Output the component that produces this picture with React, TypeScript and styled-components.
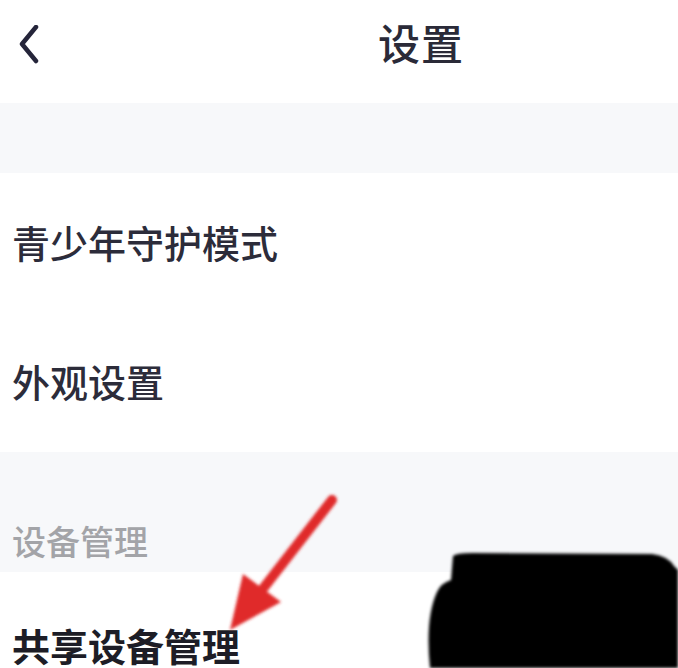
import React from "react";
import styled, { createGlobalStyle } from "styled-components";

const GlobalStyle = createGlobalStyle`
  html, body {
    margin: 0;
    padding: 0;
    background: #ffffff;
  }
  body {
    font-family: "Noto Sans CJK SC", "Noto Sans", sans-serif;
    overflow: hidden;
  }
`;

const Page = styled.div`
  position: relative;
  width: 678px;
  height: 668px;
  overflow: hidden;
  background: #ffffff;
`;

const Header = styled.header`
  height: 103px;
  display: flex;
  align-items: center;
  padding: 0 0 0 18px;
  box-sizing: border-box;
  background: #ffffff;
`;

const BackButton = styled.button`
  width: 26px;
  height: 44px;
  padding: 0;
  border: none;
  background: transparent;
  display: flex;
  align-items: center;
  margin-top: -14px;
`;

const Title = styled.h1`
  margin: -20px 0 0 334px;
  font-size: 42px;
  font-weight: 500;
  color: #2a2a38;
  letter-spacing: 1px;
`;

const Gap = styled.div<{ $h: number }>`
  height: ${(p) => p.$h}px;
  background: #f7f8fa;
`;

const Group = styled.section`
  background: #ffffff;
`;

const Row = styled.div<{ $h: number; $strong?: boolean }>`
  height: ${(p) => p.$h}px;
  display: flex;
  align-items: center;
  padding-left: 12px;
  font-size: 38px;
  font-weight: ${(p) => (p.$strong ? 700 : 500)};
  color: ${(p) => (p.$strong ? "#1d1d26" : "#2c2c3a")};
`;

const SectionHead = styled.div`
  height: 120px;
  background: #f7f8fa;
  display: flex;
  align-items: flex-end;
  padding: 0 0 7px 12px;
  box-sizing: border-box;
  font-size: 34px;
  font-weight: 500;
  color: #a3a4a8;
`;

const Overlay = styled.svg`
  position: absolute;
  left: 0;
  top: 0;
  pointer-events: none;
`;

export default function App() {
  return (
    <Page>
      <GlobalStyle />
      <Header>
        <BackButton aria-label="返回">
          <svg width="24" height="40" viewBox="0 0 24 40">
            <path
              d="M18 2 L4 19 L18 36"
              fill="none"
              stroke="#25253a"
              strokeWidth="4.5"
              strokeLinecap="round"
              strokeLinejoin="round"
            />
          </svg>
        </BackButton>
        <Title>设置</Title>
      </Header>
      <Gap $h={70} />
      <Group>
        <Row $h={136}>青少年守护模式</Row>
        <Row $h={143}>外观设置</Row>
      </Group>
      <SectionHead>设备管理</SectionHead>
      <Group>
        <Row $h={145} $strong>
          共享设备管理
        </Row>
      </Group>
      <Overlay width="678" height="668" viewBox="0 0 678 668">
        <defs>
          <filter id="soft" x="-10%" y="-10%" width="120%" height="120%">
            <feGaussianBlur stdDeviation="1.6" />
          </filter>
        </defs>
        <g filter="url(#soft)">
          <path
            d="M332 500 L262 590"
            stroke="#e02a2a"
            strokeWidth="10"
            strokeLinecap="round"
            fill="none"
          />
          <path d="M243 574 L281 602 L230 630 Z" fill="#e02a2a" />
          <path
            d="M453 556 Q456 553 472 553 L652 554 Q668 556 674 566 L678 570 L678 668 L430 668 Q425 618 437 592 Q441 583 451 580 Z"
            fill="#000000"
          />
        </g>
      </Overlay>
    </Page>
  );
}
